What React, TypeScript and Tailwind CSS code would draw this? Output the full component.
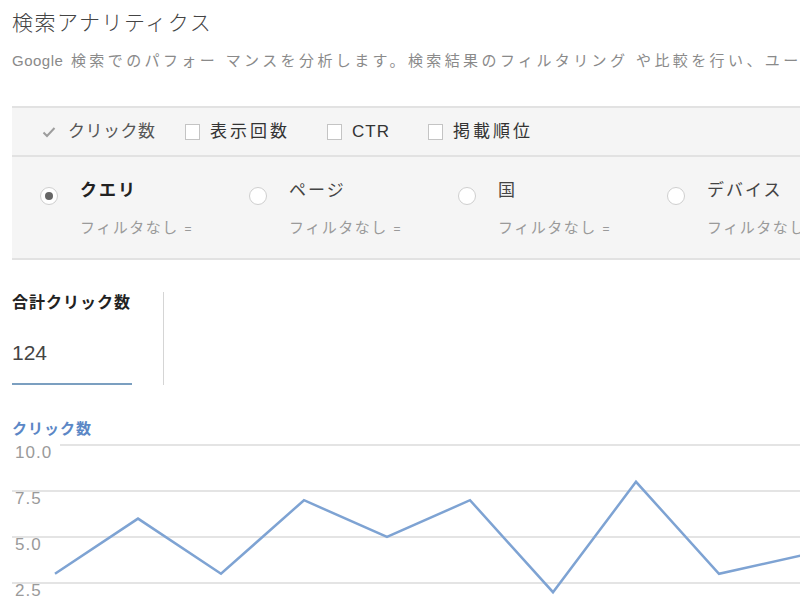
import React from 'react';

const font = { fontFamily: '"Liberation Sans", "Noto Sans CJK JP", sans-serif' };

const metrics = [
  { label: 'クリック数', checked: true, width: 'w-[143px]', track: 'tracking-[0.5px]' },
  { label: '表示回数', checked: false, width: 'w-[142px]', track: 'tracking-[3px]' },
  { label: 'CTR', checked: false, width: 'w-[101px]', track: 'tracking-[1px]' },
  { label: '掲載順位', checked: false, width: 'w-[140px]', track: 'tracking-[3px]' },
];

const groups = [
  { label: 'クエリ', selected: true },
  { label: 'ページ', selected: false },
  { label: '国', selected: false },
  { label: 'デバイス', selected: false },
];

// click counts per day, plotted against the 2.5..10 grid
const points = [3, 6, 3, 7, 5, 7, 2, 8, 3, 4];
const gridY = [5, 51, 97, 143];
const yFor = (v: number) => 5 + (10 - v) * (46 / 2.5);

const Chart = () => {
  const path = points.map((v, i) => `${55 + i * 83},${yFor(v)}`).join(' ');
  return (
    <svg width="800" height="160" className="block">
      {gridY.map((y, i) => (
        <line key={y} x1={i === 0 ? 60 : 12} x2="800" y1={y} y2={y} stroke="#e4e4e4" strokeWidth="2" />
      ))}
      {['10.0', '7.5', '5.0', '2.5'].map((t, i) => (
        <text key={t} x="15" y={gridY[i] + 13} fontSize="17" letterSpacing="1" fill="#9a9a9a" style={font}>
          {t}
        </text>
      ))}
      <polyline points={path} fill="none" stroke="#7ea3d3" strokeWidth="2.5" strokeLinejoin="miter" />
    </svg>
  );
};

export default function App() {
  return (
    <div className="w-[800px] h-[600px] overflow-hidden bg-white" style={font}>
      <h1 className="pl-3 pt-[9px] text-[21px] leading-[28px] tracking-[1.5px] font-light text-[#444]">検索アナリティクス</h1>
      <p className="pl-3 mt-[14px] text-[15px] leading-[20px] tracking-[3.4px] text-[#8a8a8a] whitespace-nowrap">
        <span className="tracking-[0.5px]">Google</span> 検索でのパフォー マンスを分析します。検索結果のフィルタリング や比較を行い、ユーザーの検索傾向を把握できます。
      </p>

      {/* metric + grouping panel */}
      <div className="ml-3 mt-[35px] bg-[#f5f5f5] border-t-2 border-b-2 border-[#e2e2e2]">
        <div className="h-[49px] flex items-center pl-[30px] border-b-2 border-[#e2e2e2] text-[17px] text-[#333]">
          {metrics.map((m) => (
            <div key={m.label} className={`flex items-center shrink-0 whitespace-nowrap ${m.width}`}>
              {m.checked ? (
                <svg width="14" height="12" viewBox="0 0 14 12" className="mr-[12px]">
                  <path d="M1.5 6.5 L5 10 L12.5 2" fill="none" stroke="#9d9d9d" strokeWidth="2" />
                </svg>
              ) : (
                <span className="w-[15px] h-[16px] mr-[10px] bg-white border border-[#c4c4c4]" />
              )}
              <span className={`${m.track} ${m.checked ? 'text-[#555]' : ''}`}>{m.label}</span>
            </div>
          ))}
        </div>
        <div className="h-[101px] flex pl-[28px] pt-[22px]">
          {groups.map((g) => (
            <div key={g.label} className="w-[209px] flex shrink-0">
              <span className="mt-[8px] w-[18px] h-[18px] rounded-full bg-white border border-[#cfcfcf] flex items-center justify-center shrink-0">
                {g.selected && <span className="w-[8px] h-[8px] rounded-full bg-[#666]" />}
              </span>
              <div className="ml-[22px] whitespace-nowrap">
                <div className={`text-[17px] leading-[24px] tracking-[2px] ${g.selected ? 'font-bold text-[#222]' : 'text-[#444]'}`}>
                  {g.label}
                </div>
                <div className="mt-[14px] text-[15px] leading-[22px] tracking-[1.5px] text-[#9a9a9a]">
                  フィルタなし <span className="text-[12px]">=</span>
                </div>
              </div>
            </div>
          ))}
        </div>
      </div>

      {/* totals */}
      <div className="flex ml-3 mt-[32px]">
        <div className="w-[120px] border-b-2 border-[#7b9fc0]">
          <div className="text-[16px] leading-[22px] tracking-[1px] font-bold text-[#222] whitespace-nowrap">合計クリック数</div>
          <div className="mt-[26px] mb-[17px] text-[21px] leading-[26px] text-[#444]">124</div>
        </div>
        <div className="ml-[31px] w-px bg-[#d5d5d5]" />
      </div>

      <div className="ml-3 mt-[34px] text-[15px] leading-[20px] tracking-[1px] font-bold text-[#5b87c6]">クリック数</div>
      <div className="mt-[1px]">
        <Chart />
      </div>
    </div>
  );
}
